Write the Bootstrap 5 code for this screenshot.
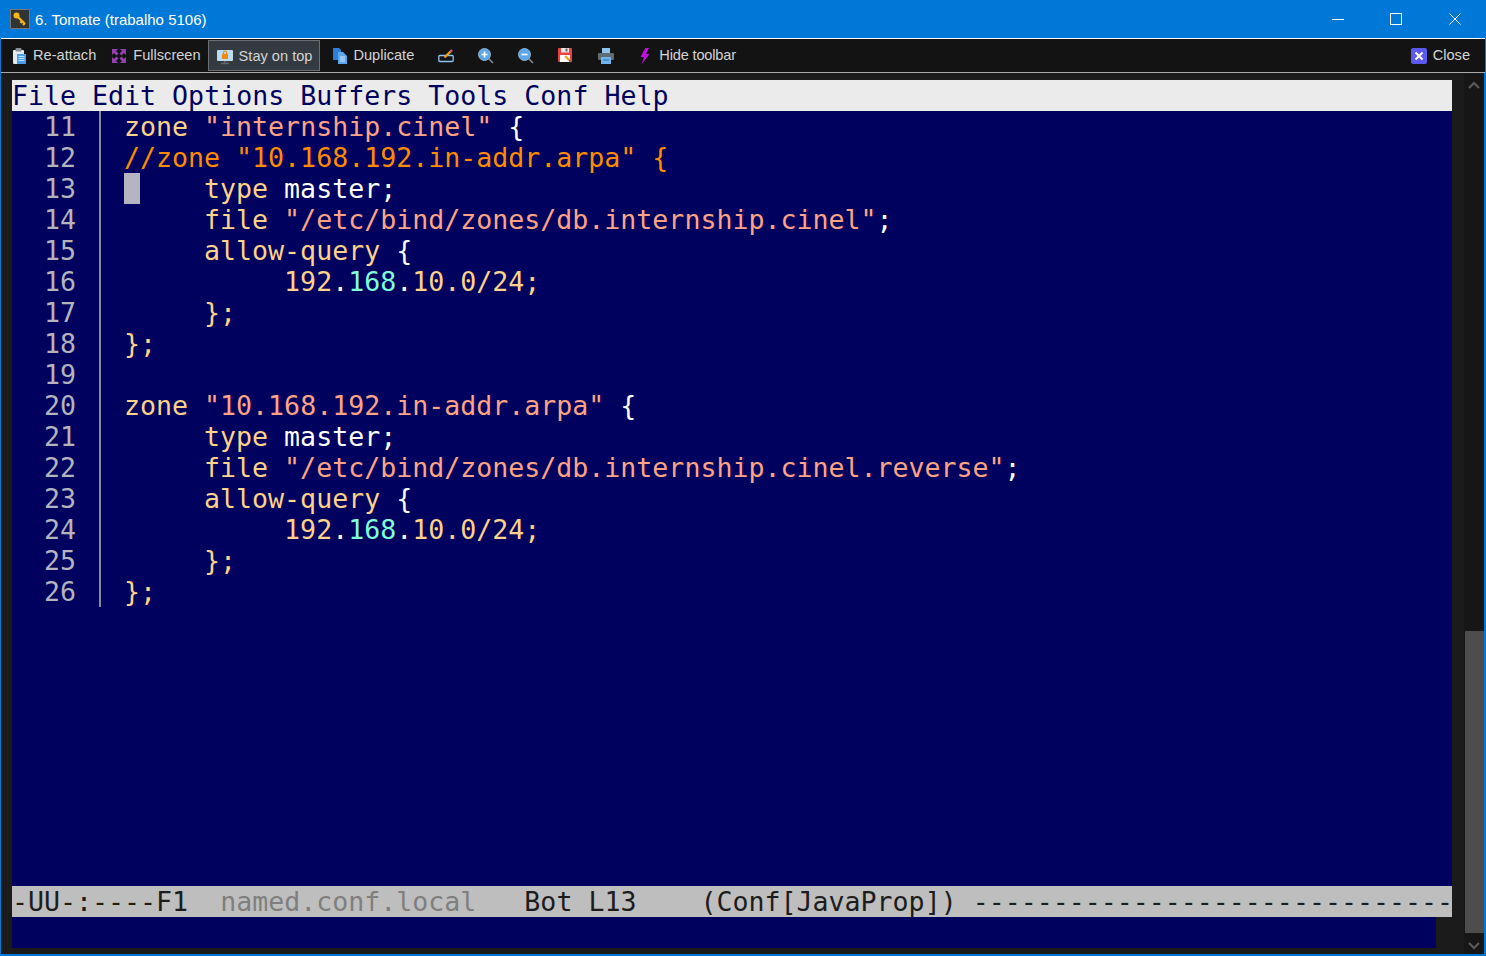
<!DOCTYPE html>
<html lang="pt">
<head>
<meta charset="utf-8">
<title>6. Tomate (trabalho 5106)</title>
<link href="https://cdn.jsdelivr.net/npm/bootstrap@5.3.0/dist/css/bootstrap.min.css" rel="stylesheet">
<style>
html,body{height:100%;overflow:hidden}
body{background:#1b1b1b;font-family:"Liberation Sans",Arial,sans-serif}
.win-shell{width:1486px;height:956px;border-left:1px solid #0078d7;border-right:2px solid #0078d7;border-bottom:2px solid #0078d7;background:#1b1b1b}
.win-title{height:38px;background:#0078d7;color:#fff;font-size:15px;margin:0 -2px 0 -1px;padding:2px 0 0 10px}
.win-logo{width:20px;height:20px;margin-top:-2px}
.win-ctl{width:58px;height:36px;margin-top:-2px}
.win-ctl-mid{margin-right:1px}
.win-ctls{margin-right:2px}
.tool-strip{height:35px;background:#131313;border-top:1px solid #fff;border-bottom:1px solid #a8a8a8;color:#d4d4d4;font-size:14.6px;padding-left:3px;margin-right:-1px}
.tool-item{height:32px;padding:2px 0 0 8px;gap:5px;white-space:nowrap}
.tool-item svg{width:16px;height:16px;flex:none}
.tool-active{background:#333a42;border:1px solid #6b6e72;margin-top:1px;height:31px;padding:3px 7px 0 8px;gap:6px}
.tool-tight{letter-spacing:-.17px}
.term-area{height:881px}
.term-pane{width:1440px;margin:7px 0 0 11px;font-family:"DejaVu Sans Mono",monospace;font-size:26.6px;line-height:31px;background:#00005f;height:868px}
.term-menu{height:31px;background:#ebebeb;color:#00005f;white-space:pre}
.term-body{height:775px;color:#ffd28a}
.gutter-col{width:64px;text-align:right;color:#b4b4bc;white-space:pre}
.gutter-rule{width:2px;height:496px;background:#8a8a96;margin:0 23px}
.code-col{white-space:pre}
.term-cur{display:inline-block;width:16px;height:31px;background:#b4b4c2;vertical-align:top}
.term-modeline{height:31px;background:#bebebe;color:#1c1c1c;overflow:hidden;white-space:pre}
.term-mini{height:31px;width:1424px;background:#00005f}
.term-tail{height:31px;margin-left:1424px;width:16px;background:#1b1b1b;margin-top:-31px}
.t-cmt{color:#ff8c00}
.t-str{color:#ffa384}
.t-wh{color:#fff}
.t-aq{color:#7fffd4}
.t-buf{color:#7f7f7f}
.scroll-rail{width:33px}
.scroll-lane{width:20px;margin-left:12px;height:100%;background:#161616}
.scroll-thumb{height:302px;background:#4d4d4d;margin:0 0 0 1px}
.scroll-arrow{height:17px;color:#5a5a5a}
.scroll-spacer{height:538px}
</style>
</head>
<body class="m-0">
<div class="win-shell d-flex flex-column">
  <header class="win-title d-flex align-items-center">
    <svg class="win-logo" viewBox="0 0 20 20"><rect width="20" height="20" fill="#333"/><rect x=".5" y=".5" width="19" height="19" fill="none" stroke="#777"/><circle cx="6.500" cy="6.500" r="3" fill="#f2b81c"/><path d="M8 8l7 7M12 12l-1.500 2M14.500 14.500l-1.500 1.500" stroke="#f2b81c" stroke-width="2.200" fill="none"/></svg>
    <span style="margin-left:5px">6. Tomate (trabalho 5106)</span>
    <div class="d-flex ms-auto win-ctls">
      <div class="win-ctl d-flex align-items-center justify-content-center"><svg width="12" height="12" viewBox="0 0 12 12"><path d="M0 6.500h12" stroke="#fff"/></svg></div>
      <div class="win-ctl win-ctl-mid d-flex align-items-center justify-content-center"><svg width="12" height="12" viewBox="0 0 12 12"><rect x=".5" y=".5" width="11" height="11" fill="none" stroke="#fff"/></svg></div>
      <div class="win-ctl d-flex align-items-center justify-content-center"><svg width="12" height="12" viewBox="0 0 12 12"><path d="M.5.500l11 11M11.500.500l-11 11" stroke="#fff"/></svg></div>
    </div>
  </header>

  <nav class="tool-strip d-flex align-items-start">
    <div class="tool-item d-flex align-items-center"><svg viewBox="0 0 16 16"><rect x="1" y="2" width="11" height="14" rx="1" fill="#e3e9f0"/><rect x="3.500" y="0" width="6" height="3.500" rx="1" fill="#8a8f96"/><rect x="5" y="6" width="9" height="10" fill="#4a9be8"/><path d="M6.500 8.500h6M6.500 10.500h6M6.500 12.500h6" stroke="#bfe0ff"/></svg><span>Re-attach</span></div>
    <div class="tool-item d-flex align-items-center" style="margin-left:7px;gap:6px"><svg viewBox="0 0 16 16" fill="#9440b0"><path d="M1 1h6L5 3l2.500 2.500-2 2L3 5 1 7zM15 1H9l2 2-2.500 2.500 2 2L13 5l2 2zM1 15h6l-2-2 2.500-2.500-2-2L3 11l-2-2zM15 15H9l2-2-2.500-2.500 2-2L13 11l2-2z"/></svg><span>Fullscreen</span></div>
    <div class="tool-item tool-active d-flex align-items-center" style="margin-left:7px"><svg viewBox="0 0 16 16"><rect y="1" width="16" height="11" rx="1" fill="#bcdcf2"/><rect x="5" y="5" width="6" height="5" fill="#f08a12"/><path d="M6.500 5V3.500a1.500 1.500 0 013 0V5" fill="none" stroke="#f08a12" stroke-width="1.200"/><path d="M4 14.500h8M8 12v2" stroke="#666" stroke-width="1.500"/></svg><span>Stay on top</span></div>
    <div class="tool-item d-flex align-items-center" style="margin-left:4px;padding-left:8px"><svg viewBox="0 0 16 16"><path d="M1 0h6l2 2v10H1z" fill="#2d7fd6"/><path d="M6 4h5l4 4v8H6z" fill="#5ba7ee"/><path d="M8 9h5M8 11h5M8 13h5" stroke="#cfe6ff"/></svg><span>Duplicate</span></div>
    <div class="tool-item d-flex align-items-center" style="margin-left:16px"><svg viewBox="0 0 16 16"><rect x=".8" y="7.500" width="14.400" height="6" rx="1" fill="none" stroke="#8cc4ee" stroke-width="1.300"/><path d="M6.500 9.500L12.500 3.500" stroke="#f09a1a" stroke-width="2.400"/><path d="M12.500 3.500l1.500-1.500" stroke="#e45b6b" stroke-width="2.400"/></svg></div>
    <div class="tool-item d-flex align-items-center" style="margin-left:16px"><svg viewBox="0 0 16 16"><path d="M10 10l5 5" stroke="#7d868c" stroke-width="1.700"/><circle cx="6.500" cy="6.500" r="6" fill="#5aa6e8"/><circle cx="6.500" cy="6.500" r="6" fill="none" stroke="#8cb3cf"/><path d="M3.500 6.500h6M6.500 3.500v6" stroke="#fff" stroke-width="1.700"/></svg></div>
    <div class="tool-item d-flex align-items-center" style="margin-left:16px"><svg viewBox="0 0 16 16"><path d="M10 10l5 5" stroke="#7d868c" stroke-width="1.700"/><circle cx="6.500" cy="6.500" r="6" fill="#5aa6e8"/><circle cx="6.500" cy="6.500" r="6" fill="none" stroke="#8cb3cf"/><path d="M3.500 6.500h6" stroke="#fff" stroke-width="1.700"/></svg></div>
    <div class="tool-item d-flex align-items-center" style="margin-left:15px"><svg viewBox="0 0 16 16"><rect x="1" y="0" width="14" height="14" rx="1" fill="#ee4040"/><rect x="4" y="0" width="8" height="4.500" fill="#e8e8e8"/><rect x="8.500" y=".5" width="2" height="3" fill="#666"/><rect x="3" y="7" width="10" height="7" fill="#fff"/><path d="M8 8l4 4" stroke="#f0a020" stroke-width="2.200"/><path d="M12 12l2 2" stroke="#a06060" stroke-width="2"/></svg></div>
    <div class="tool-item d-flex align-items-center" style="margin-left:17px"><svg viewBox="0 0 16 16"><rect x="4" y="0" width="8" height="5" fill="#8cc4ee"/><rect y="5" width="16" height="7" rx="1" fill="#616b72"/><rect x="3" y="9" width="10" height="7" fill="#6fb5ec"/><path d="M5 12h6" stroke="#2d6fa8"/></svg></div>
    <div class="tool-item d-flex align-items-center" style="margin-left:15px;gap:6px"><svg viewBox="0 0 16 16"><path d="M8.500-.5L3.500 9h3.500L4.500 16.500 12.500 6H9L12 -.5z" fill="#c010e0"/></svg><span class="tool-tight">Hide toolbar</span></div>
    <div class="tool-item d-flex align-items-center ms-auto" style="padding-right:15px;gap:6px"><svg viewBox="0 0 16 16"><rect width="16" height="16" rx="2" fill="#5a5af0"/><path d="M4.500 4.500l7 7M11.500 4.500l-7 7" stroke="#fff" stroke-width="2"/></svg><span>Close</span></div>
  </nav>

  <div class="term-area d-flex">
    <main class="term-pane">
      <div class="term-menu">File Edit Options Buffers Tools Conf Help</div>
      <div class="term-body d-flex">
        <div class="gutter-col">11
12
13
14
15
16
17
18
19
20
21
22
23
24
25
26</div>
        <div class="gutter-rule"></div>
        <div class="code-col flex-grow-1">zone <span class="t-str">"internship.cinel"</span> <span class="t-wh">{</span>
<span class="t-cmt">//zone "10.168.192.in-addr.arpa" {</span>
<span class="term-cur"></span>    type <span class="t-wh">master;</span>
     file <span class="t-str">"/etc/bind/zones/db.internship.cinel"</span><span class="t-wh">;</span>
     allow-query <span class="t-wh">{</span>
          192<span class="t-wh">.</span><span class="t-aq">168</span><span class="t-wh">.</span>10.0/24;
     };
};

zone <span class="t-str">"10.168.192.in-addr.arpa"</span> <span class="t-wh">{</span>
     type <span class="t-wh">master;</span>
     file <span class="t-str">"/etc/bind/zones/db.internship.cinel.reverse"</span><span class="t-wh">;</span>
     allow-query <span class="t-wh">{</span>
          192<span class="t-wh">.</span><span class="t-aq">168</span><span class="t-wh">.</span>10.0/24;
     };
};</div>
      </div>
      <div class="term-modeline">-UU-:----F1  <span class="t-buf">named.conf.local</span>   Bot L13    (Conf[JavaProp]) ------------------------------</div>
      <div class="term-mini"></div>
      <div class="term-tail"></div>
    </main>
    <aside class="scroll-rail">
      <div class="scroll-lane d-flex flex-column">
        <div class="scroll-arrow d-flex align-items-center justify-content-center mt-1"><svg width="12" height="8" viewBox="0 0 12 8"><path d="M1 7l5-5 5 5" fill="none" stroke="#5a5a5a" stroke-width="2.200"/></svg></div>
        <div class="scroll-spacer"></div>
        <div class="scroll-thumb"></div>
        <div class="scroll-arrow d-flex align-items-center justify-content-center mt-1"><svg width="12" height="8" viewBox="0 0 12 8"><path d="M1 1l5 5 5-5" fill="none" stroke="#5a5a5a" stroke-width="2.200"/></svg></div>
      </div>
    </aside>
  </div>
</div>
</body>
</html>
